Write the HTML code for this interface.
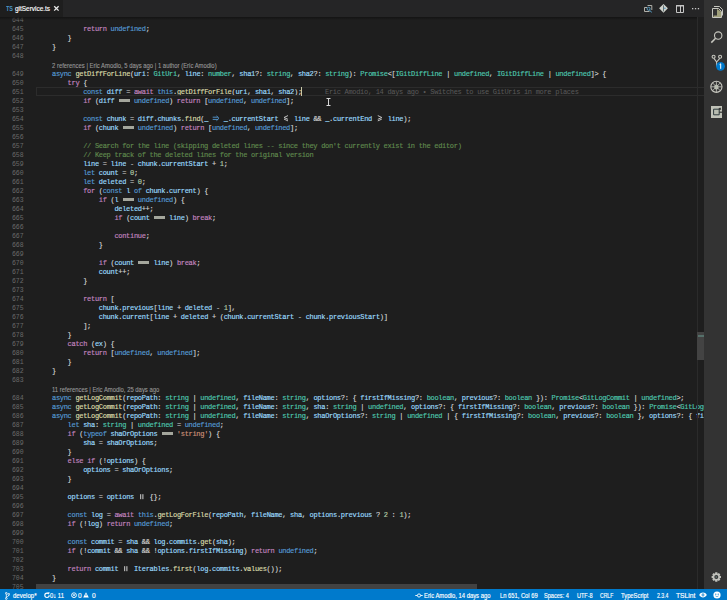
<!DOCTYPE html>
<html><head><meta charset="utf-8"><style>
html,body{margin:0;padding:0}
body{width:727px;height:600px;overflow:hidden;background:#1e1e1e;position:relative;font-family:"Liberation Sans",sans-serif}
#ed{position:absolute;left:0;top:0;width:704px;height:589px;overflow:hidden}
.code{position:absolute;left:36.4px;font-family:"Liberation Mono",monospace;font-size:7px;letter-spacing:-0.3px;-webkit-text-stroke:0.15px;line-height:9px;white-space:pre;color:#d4d4d4}
.code b{font-weight:normal}
.ln{position:absolute;left:0;width:23.6px;text-align:right;font-family:"Liberation Mono",monospace;font-size:6.5px;line-height:9px;color:#6a6a6a}
.cl{position:absolute;left:51.5px;font-family:"Liberation Sans",sans-serif;font-size:6.6px;line-height:9px;color:#999;white-space:pre;transform:scaleX(0.894);transform-origin:0 0;-webkit-text-stroke:0.1px #999}
.blue{color:#569cd6}.pink{color:#c586c0}.fn{color:#dcdcaa}.var{color:#9cdcfe}.type{color:#4ec9b0}
.com{color:#608b4e}.str{color:#ce9178}.num{color:#b5cea8}.op{color:#d4d4d4}
i.eq{display:inline-block;width:11.7px;height:9px;position:relative;vertical-align:top}
i.eq:after{content:"";position:absolute;left:0.4px;right:0.4px;top:1.9px;height:3px;background:#a4a69c}
svg.lg{display:inline-block;width:7.8px;height:9px;vertical-align:top}

</style></head><body>
<div id="ed">
<div class="ln" style="top:16px">644</div>
<div class="ln" style="top:25px">645</div>
<div class="code" style="top:25px">            <b class="pink">return</b> <b class="blue">undefined</b><b class="op">;</b></div>
<div class="ln" style="top:34px">646</div>
<div class="code" style="top:34px">        <b class="op">}</b></div>
<div class="ln" style="top:43px">647</div>
<div class="code" style="top:43px">    <b class="op">}</b></div>
<div class="ln" style="top:52px">648</div>
<div class="cl" style="top:61px">2 references | Eric Amodio, 5 days ago | 1 author (Eric Amodio)</div>
<div class="ln" style="top:70px">649</div>
<div class="code" style="top:70px">    <b class="blue">async</b> <b class="fn">getDiffForLine</b><b class="op">(</b><b class="var">uri</b><b class="op">:</b> <b class="type">GitUri</b><b class="op">,</b> <b class="var">line</b><b class="op">:</b> <b class="type">number</b><b class="op">,</b> <b class="var">sha1</b><b class="op">?</b><b class="op">:</b> <b class="type">string</b><b class="op">,</b> <b class="var">sha2</b><b class="op">?</b><b class="op">:</b> <b class="type">string</b><b class="op">)</b><b class="op">:</b> <b class="type">Promise</b><b class="op">&lt;</b><b class="op">[</b><b class="type">IGitDiffLine</b> <b class="op">|</b> <b class="type">undefined</b><b class="op">,</b> <b class="type">IGitDiffLine</b> <b class="op">|</b> <b class="type">undefined</b><b class="op">]</b><b class="op">&gt;</b> <b class="op">{</b></div>
<div class="ln" style="top:79px">650</div>
<div class="code" style="top:79px">        <b class="pink">try</b> <b class="op">{</b></div>
<div class="ln" style="top:88px">651</div>
<div class="code" style="top:88px">            <b class="blue">const</b> <b class="var">diff</b> <b class="op">=</b> <b class="pink">await</b> <b class="blue">this</b><b class="op">.</b><b class="fn">getDiffForFile</b><b class="op">(</b><b class="var">uri</b><b class="op">,</b> <b class="var">sha1</b><b class="op">,</b> <b class="var">sha2</b><b class="op">)</b><b class="op">;</b></div>
<div class="ln" style="top:97px">652</div>
<div class="code" style="top:97px">            <b class="pink">if</b> <b class="op">(</b><b class="var">diff</b> <i class="eq"></i> <b class="blue">undefined</b><b class="op">)</b> <b class="pink">return</b> <b class="op">[</b><b class="blue">undefined</b><b class="op">,</b> <b class="blue">undefined</b><b class="op">]</b><b class="op">;</b></div>
<div class="ln" style="top:106px">653</div>
<div class="ln" style="top:115px">654</div>
<div class="code" style="top:115px">            <b class="blue">const</b> <b class="var">chunk</b> <b class="op">=</b> <b class="var">diff</b><b class="op">.</b><b class="var">chunks</b><b class="op">.</b><b class="fn">find</b><b class="op">(</b><b class="var">_</b> <svg class="lg" viewBox="0 0 7.8 9"><path d="M0.7 2.2H5.8M0.7 4.4H5.8M4.5 0.9L7 3.3L4.5 5.7" stroke="#569cd6" stroke-width="0.9" fill="none"/></svg> <b class="var">_</b><b class="op">.</b><b class="var">currentStart</b> <svg class="lg" viewBox="0 0 7.8 9"><path d="M6 0.6L2 2.5L6 4.3M2 4.1L6 5.9" stroke="#d4d4d4" stroke-width="0.9" fill="none"/></svg> <b class="var">line</b> <b class="op">&amp;&amp;</b> <b class="var">_</b><b class="op">.</b><b class="var">currentEnd</b> <svg class="lg" viewBox="0 0 7.8 9"><path d="M1.8 0.6L5.8 2.5L1.8 4.3M5.8 4.1L1.8 5.9" stroke="#d4d4d4" stroke-width="0.9" fill="none"/></svg> <b class="var">line</b><b class="op">)</b><b class="op">;</b></div>
<div class="ln" style="top:124px">655</div>
<div class="code" style="top:124px">            <b class="pink">if</b> <b class="op">(</b><b class="var">chunk</b> <i class="eq"></i> <b class="blue">undefined</b><b class="op">)</b> <b class="pink">return</b> <b class="op">[</b><b class="blue">undefined</b><b class="op">,</b> <b class="blue">undefined</b><b class="op">]</b><b class="op">;</b></div>
<div class="ln" style="top:133px">656</div>
<div class="ln" style="top:142px">657</div>
<div class="code" style="top:142px">            <b class="com">// Search for the line (skipping deleted lines -- since they don&#x27;t currently exist in the editor)</b></div>
<div class="ln" style="top:151px">658</div>
<div class="code" style="top:151px">            <b class="com">// Keep track of the deleted lines for the original version</b></div>
<div class="ln" style="top:160px">659</div>
<div class="code" style="top:160px">            <b class="var">line</b> <b class="op">=</b> <b class="var">line</b> <b class="op">-</b> <b class="var">chunk</b><b class="op">.</b><b class="var">currentStart</b> <b class="op">+</b> <b class="num">1</b><b class="op">;</b></div>
<div class="ln" style="top:169px">660</div>
<div class="code" style="top:169px">            <b class="blue">let</b> <b class="var">count</b> <b class="op">=</b> <b class="num">0</b><b class="op">;</b></div>
<div class="ln" style="top:178px">661</div>
<div class="code" style="top:178px">            <b class="blue">let</b> <b class="var">deleted</b> <b class="op">=</b> <b class="num">0</b><b class="op">;</b></div>
<div class="ln" style="top:187px">662</div>
<div class="code" style="top:187px">            <b class="pink">for</b> <b class="op">(</b><b class="blue">const</b> <b class="var">l</b> <b class="blue">of</b> <b class="var">chunk</b><b class="op">.</b><b class="var">current</b><b class="op">)</b> <b class="op">{</b></div>
<div class="ln" style="top:196px">663</div>
<div class="code" style="top:196px">                <b class="pink">if</b> <b class="op">(</b><b class="var">l</b> <i class="eq"></i> <b class="blue">undefined</b><b class="op">)</b> <b class="op">{</b></div>
<div class="ln" style="top:205px">664</div>
<div class="code" style="top:205px">                    <b class="var">deleted</b><b class="op">++</b><b class="op">;</b></div>
<div class="ln" style="top:214px">665</div>
<div class="code" style="top:214px">                    <b class="pink">if</b> <b class="op">(</b><b class="var">count</b> <i class="eq"></i> <b class="var">line</b><b class="op">)</b> <b class="pink">break</b><b class="op">;</b></div>
<div class="ln" style="top:223px">666</div>
<div class="ln" style="top:232px">667</div>
<div class="code" style="top:232px">                    <b class="pink">continue</b><b class="op">;</b></div>
<div class="ln" style="top:241px">668</div>
<div class="code" style="top:241px">                <b class="op">}</b></div>
<div class="ln" style="top:250px">669</div>
<div class="ln" style="top:259px">670</div>
<div class="code" style="top:259px">                <b class="pink">if</b> <b class="op">(</b><b class="var">count</b> <i class="eq"></i> <b class="var">line</b><b class="op">)</b> <b class="pink">break</b><b class="op">;</b></div>
<div class="ln" style="top:268px">671</div>
<div class="code" style="top:268px">                <b class="var">count</b><b class="op">++</b><b class="op">;</b></div>
<div class="ln" style="top:277px">672</div>
<div class="code" style="top:277px">            <b class="op">}</b></div>
<div class="ln" style="top:286px">673</div>
<div class="ln" style="top:295px">674</div>
<div class="code" style="top:295px">            <b class="pink">return</b> <b class="op">[</b></div>
<div class="ln" style="top:304px">675</div>
<div class="code" style="top:304px">                <b class="var">chunk</b><b class="op">.</b><b class="var">previous</b><b class="op">[</b><b class="var">line</b> <b class="op">+</b> <b class="var">deleted</b> <b class="op">-</b> <b class="num">1</b><b class="op">]</b><b class="op">,</b></div>
<div class="ln" style="top:313px">676</div>
<div class="code" style="top:313px">                <b class="var">chunk</b><b class="op">.</b><b class="var">current</b><b class="op">[</b><b class="var">line</b> <b class="op">+</b> <b class="var">deleted</b> <b class="op">+</b> <b class="op">(</b><b class="var">chunk</b><b class="op">.</b><b class="var">currentStart</b> <b class="op">-</b> <b class="var">chunk</b><b class="op">.</b><b class="var">previousStart</b><b class="op">)</b><b class="op">]</b></div>
<div class="ln" style="top:322px">677</div>
<div class="code" style="top:322px">            <b class="op">]</b><b class="op">;</b></div>
<div class="ln" style="top:331px">678</div>
<div class="code" style="top:331px">        <b class="op">}</b></div>
<div class="ln" style="top:340px">679</div>
<div class="code" style="top:340px">        <b class="pink">catch</b> <b class="op">(</b><b class="var">ex</b><b class="op">)</b> <b class="op">{</b></div>
<div class="ln" style="top:349px">680</div>
<div class="code" style="top:349px">            <b class="pink">return</b> <b class="op">[</b><b class="blue">undefined</b><b class="op">,</b> <b class="blue">undefined</b><b class="op">]</b><b class="op">;</b></div>
<div class="ln" style="top:358px">681</div>
<div class="code" style="top:358px">        <b class="op">}</b></div>
<div class="ln" style="top:367px">682</div>
<div class="code" style="top:367px">    <b class="op">}</b></div>
<div class="ln" style="top:376px">683</div>
<div class="cl" style="top:385px">11 references | Eric Amodio, 25 days ago</div>
<div class="ln" style="top:394px">684</div>
<div class="code" style="top:394px">    <b class="blue">async</b> <b class="fn">getLogCommit</b><b class="op">(</b><b class="var">repoPath</b><b class="op">:</b> <b class="type">string</b> <b class="op">|</b> <b class="type">undefined</b><b class="op">,</b> <b class="var">fileName</b><b class="op">:</b> <b class="type">string</b><b class="op">,</b> <b class="var">options</b><b class="op">?</b><b class="op">:</b> <b class="op">{</b> <b class="var">firstIfMissing</b><b class="op">?</b><b class="op">:</b> <b class="type">boolean</b><b class="op">,</b> <b class="var">previous</b><b class="op">?</b><b class="op">:</b> <b class="type">boolean</b> <b class="op">}</b><b class="op">)</b><b class="op">:</b> <b class="type">Promise</b><b class="op">&lt;</b><b class="type">GitLogCommit</b> <b class="op">|</b> <b class="type">undefined</b><b class="op">&gt;</b><b class="op">;</b></div>
<div class="ln" style="top:403px">685</div>
<div class="code" style="top:403px">    <b class="blue">async</b> <b class="fn">getLogCommit</b><b class="op">(</b><b class="var">repoPath</b><b class="op">:</b> <b class="type">string</b> <b class="op">|</b> <b class="type">undefined</b><b class="op">,</b> <b class="var">fileName</b><b class="op">:</b> <b class="type">string</b><b class="op">,</b> <b class="var">sha</b><b class="op">:</b> <b class="type">string</b> <b class="op">|</b> <b class="type">undefined</b><b class="op">,</b> <b class="var">options</b><b class="op">?</b><b class="op">:</b> <b class="op">{</b> <b class="var">firstIfMissing</b><b class="op">?</b><b class="op">:</b> <b class="type">boolean</b><b class="op">,</b> <b class="var">previous</b><b class="op">?</b><b class="op">:</b> <b class="type">boolean</b> <b class="op">}</b><b class="op">)</b><b class="op">:</b> <b class="type">Promise</b><b class="op">&lt;</b><b class="type">GitLogCommit</b> <b class="op">|</b> <b class="type">undefined</b><b class="op">&gt;</b><b class="op">;</b></div>
<div class="ln" style="top:412px">686</div>
<div class="code" style="top:412px">    <b class="blue">async</b> <b class="fn">getLogCommit</b><b class="op">(</b><b class="var">repoPath</b><b class="op">:</b> <b class="type">string</b> <b class="op">|</b> <b class="type">undefined</b><b class="op">,</b> <b class="var">fileName</b><b class="op">:</b> <b class="type">string</b><b class="op">,</b> <b class="var">shaOrOptions</b><b class="op">?</b><b class="op">:</b> <b class="type">string</b> <b class="op">|</b> <b class="type">undefined</b> <b class="op">|</b> <b class="op">{</b> <b class="var">firstIfMissing</b><b class="op">?</b><b class="op">:</b> <b class="type">boolean</b><b class="op">,</b> <b class="var">previous</b><b class="op">?</b><b class="op">:</b> <b class="type">boolean</b> <b class="op">}</b><b class="op">,</b> <b class="var">options</b><b class="op">?</b><b class="op">:</b> <b class="op">{</b> <b class="var">firstIfMissing</b><b class="op">?</b><b class="op">:</b> <b class="type">boolean</b><b class="op">,</b> <b class="var">previous</b><b class="op">?</b><b class="op">:</b> <b class="type">boolean</b> <b class="op">}</b><b class="op">)</b><b class="op">:</b> <b class="type">Promise</b><b class="op">&lt;</b><b class="type">GitLogCommit</b> <b class="op">|</b> <b class="type">undefined</b><b class="op">&gt;</b> <b class="op">{</b></div>
<div class="ln" style="top:421px">687</div>
<div class="code" style="top:421px">        <b class="blue">let</b> <b class="var">sha</b><b class="op">:</b> <b class="type">string</b> <b class="op">|</b> <b class="type">undefined</b> <b class="op">=</b> <b class="blue">undefined</b><b class="op">;</b></div>
<div class="ln" style="top:430px">688</div>
<div class="code" style="top:430px">        <b class="pink">if</b> <b class="op">(</b><b class="blue">typeof</b> <b class="var">shaOrOptions</b> <i class="eq"></i> <b class="str">&#x27;string&#x27;</b><b class="op">)</b> <b class="op">{</b></div>
<div class="ln" style="top:439px">689</div>
<div class="code" style="top:439px">            <b class="var">sha</b> <b class="op">=</b> <b class="var">shaOrOptions</b><b class="op">;</b></div>
<div class="ln" style="top:448px">690</div>
<div class="code" style="top:448px">        <b class="op">}</b></div>
<div class="ln" style="top:457px">691</div>
<div class="code" style="top:457px">        <b class="pink">else</b> <b class="pink">if</b> <b class="op">(</b><b class="op">!</b><b class="var">options</b><b class="op">)</b> <b class="op">{</b></div>
<div class="ln" style="top:466px">692</div>
<div class="code" style="top:466px">            <b class="var">options</b> <b class="op">=</b> <b class="var">shaOrOptions</b><b class="op">;</b></div>
<div class="ln" style="top:475px">693</div>
<div class="code" style="top:475px">        <b class="op">}</b></div>
<div class="ln" style="top:484px">694</div>
<div class="ln" style="top:493px">695</div>
<div class="code" style="top:493px">        <b class="var">options</b> <b class="op">=</b> <b class="var">options</b> <svg class="lg" viewBox="0 0 7.8 9"><path d="M2.7 1.2V6.2M4.9 1.2V6.2" stroke="#d4d4d4" stroke-width="1" fill="none"/></svg> <b class="op">{</b><b class="op">}</b><b class="op">;</b></div>
<div class="ln" style="top:502px">696</div>
<div class="ln" style="top:511px">697</div>
<div class="code" style="top:511px">        <b class="blue">const</b> <b class="var">log</b> <b class="op">=</b> <b class="pink">await</b> <b class="blue">this</b><b class="op">.</b><b class="fn">getLogForFile</b><b class="op">(</b><b class="var">repoPath</b><b class="op">,</b> <b class="var">fileName</b><b class="op">,</b> <b class="var">sha</b><b class="op">,</b> <b class="var">options</b><b class="op">.</b><b class="var">previous</b> <b class="op">?</b> <b class="num">2</b> <b class="op">:</b> <b class="num">1</b><b class="op">)</b><b class="op">;</b></div>
<div class="ln" style="top:520px">698</div>
<div class="code" style="top:520px">        <b class="pink">if</b> <b class="op">(</b><b class="op">!</b><b class="var">log</b><b class="op">)</b> <b class="pink">return</b> <b class="blue">undefined</b><b class="op">;</b></div>
<div class="ln" style="top:529px">699</div>
<div class="ln" style="top:538px">700</div>
<div class="code" style="top:538px">        <b class="blue">const</b> <b class="var">commit</b> <b class="op">=</b> <b class="var">sha</b> <b class="op">&amp;&amp;</b> <b class="var">log</b><b class="op">.</b><b class="var">commits</b><b class="op">.</b><b class="fn">get</b><b class="op">(</b><b class="var">sha</b><b class="op">)</b><b class="op">;</b></div>
<div class="ln" style="top:547px">701</div>
<div class="code" style="top:547px">        <b class="pink">if</b> <b class="op">(</b><b class="op">!</b><b class="var">commit</b> <b class="op">&amp;&amp;</b> <b class="var">sha</b> <b class="op">&amp;&amp;</b> <b class="op">!</b><b class="var">options</b><b class="op">.</b><b class="var">firstIfMissing</b><b class="op">)</b> <b class="pink">return</b> <b class="blue">undefined</b><b class="op">;</b></div>
<div class="ln" style="top:556px">702</div>
<div class="ln" style="top:565px">703</div>
<div class="code" style="top:565px">        <b class="pink">return</b> <b class="var">commit</b> <svg class="lg" viewBox="0 0 7.8 9"><path d="M2.7 1.2V6.2M4.9 1.2V6.2" stroke="#d4d4d4" stroke-width="1" fill="none"/></svg> <b class="var">Iterables</b><b class="op">.</b><b class="fn">first</b><b class="op">(</b><b class="var">log</b><b class="op">.</b><b class="var">commits</b><b class="op">.</b><b class="fn">values</b><b class="op">(</b><b class="op">)</b><b class="op">)</b><b class="op">;</b></div>
<div class="ln" style="top:574px">704</div>
<div class="code" style="top:574px">    <b class="op">}</b></div>
<div class="ln" style="top:583px">705</div>
</div>
<!-- current line box -->
<div style="position:absolute;left:36px;top:87px;width:672px;height:7px;border:1px solid #2c2c2c"></div>
<div style="position:absolute;left:301px;top:87px;width:1px;height:9px;background:#c8c8a8"></div>
<!-- blame annotation -->
<div style="position:absolute;left:325.0px;top:88px;font-family:'Liberation Mono',monospace;font-size:7px;letter-spacing:-0.3px;line-height:9px;white-space:pre;color:#5a5a5a">Eric Amodio, 14 days ago • Switches to use GitUris in more places</div>
<!-- mouse ibeam -->
<svg style="position:absolute;left:325px;top:97px" width="8" height="10" viewBox="0 0 8 10"><path d="M1.5 1.5h4M3.5 1.5v7M1.5 8.5h4" stroke="#d8d8d8" stroke-width="1" fill="none"/></svg>
<!-- vertical scrollbar -->
<div style="position:absolute;left:697px;top:17px;width:1px;height:572px;background:#2b2b2b"></div>
<div style="position:absolute;left:697px;top:332px;width:7px;height:28px;background:#434343"></div>
<div style="position:absolute;left:698px;top:335px;width:6px;height:2px;background:#55706a"></div>
<!-- horizontal scrollbar -->
<div style="position:absolute;left:36px;top:584px;width:440.5px;height:5px;background:#424242"></div>
<!-- tab bar -->
<div style="position:absolute;left:0;top:0;width:704px;height:17px;background:#252526"></div>
<div style="position:absolute;left:0;top:17px;width:697px;height:3px;background:linear-gradient(#131313,rgba(30,30,30,0))"></div>
<div style="position:absolute;left:0;top:0;width:63px;height:17px;background:#1e1e1e"></div>
<div style="position:absolute;left:6.2px;top:4px;font-family:'Liberation Sans',sans-serif;font-weight:bold;font-size:7px;line-height:9px;color:#4a94c6;transform:scaleX(0.78);transform-origin:0 0">TS</div>
<div style="position:absolute;left:15px;top:4px;font-family:'Liberation Sans',sans-serif;font-size:6.8px;line-height:9px;color:#ffffff;white-space:pre;transform:scaleX(0.946);transform-origin:0 0;-webkit-text-stroke:0.15px #fff">gitService.ts</div>
<svg style="position:absolute;left:53px;top:5px" width="7" height="7" viewBox="0 0 7 7"><path d="M1.2 1.2L5.6 5.6M5.6 1.2L1.2 5.6" stroke="#e8e8e8" stroke-width="1.3"/></svg>
<!-- editor title icons -->
<svg style="position:absolute;left:642px;top:3px" width="12" height="11" viewBox="0 0 12 11"><path d="M5.5 2.5H9.8V7" stroke="#c0c0b8" fill="none" stroke-width="0.9"/><path d="M2.5 4.5H5M2.5 4.5V8.5H7.5" stroke="#c0c0b8" fill="none" stroke-width="0.9"/><circle cx="6.6" cy="5.8" r="1.5" stroke="#5aa6cf" fill="none" stroke-width="0.9"/><path d="M7.4 7.2L9.8 9.3" stroke="#5aa6cf" stroke-width="1"/></svg>
<svg style="position:absolute;left:658px;top:3px" width="11" height="11" viewBox="0 0 11 11"><path d="M5.5 0.9L9.9 5.3L5.5 9.7L1.1 5.3z" fill="#cfd2cc"/><path d="M5.5 2.4v6" stroke="#46555a" stroke-width="0.8"/><circle cx="6.9" cy="5.3" r="0.7" fill="#3f8fbf"/></svg>
<svg style="position:absolute;left:675px;top:4px" width="10" height="10" viewBox="0 0 10 10"><path d="M1.5 1.5H8.5V8.5H1.5Z" stroke="#c5c5c5" fill="none" stroke-width="1"/><path d="M1 1.8H9" stroke="#c5c5c5" stroke-width="1.4"/><path d="M5.5 2V8.5" stroke="#c5c5c5" stroke-width="1"/></svg>
<svg style="position:absolute;left:691px;top:6px" width="9" height="5" viewBox="0 0 9 5"><rect x="1" y="2" width="1.3" height="1.3" fill="#c5c5c5"/><rect x="3.9" y="2" width="1.3" height="1.3" fill="#c5c5c5"/><rect x="6.8" y="2" width="1.3" height="1.3" fill="#c5c5c5"/></svg>
<!-- activity bar -->
<div style="position:absolute;left:704px;top:0;width:23px;height:589px;background:#333333"></div>
<svg style="position:absolute;left:704px;top:0" width="23" height="125" viewBox="0 0 23 125">
 <g fill="none" stroke="#c8c8c0" stroke-width="1">
  <path d="M10 6.5h5.5l3 3v6"/>
  <path d="M8.5 8.5h6l3 3v6h-9z"/>
 </g>
 <path d="M13 9L17 11.5V17H9.5V15.6H13z" fill="#a0a07a"/>
 <g fill="none" stroke="#c8c8c0" stroke-width="1.1">
  <circle cx="14.2" cy="35.6" r="3.7"/>
  <path d="M11.6 38.3L7.3 42.6" stroke-width="1.5"/>
  <circle cx="9.6" cy="56.8" r="1.5"/>
  <circle cx="16.1" cy="56.8" r="1.5"/>
  <path d="M9.9 58.4L12.6 62V66.5M15.8 58.4L12.6 62"/>
  <circle cx="12.4" cy="86.8" r="5.6" stroke-width="1.1"/>
  <path d="M12.4 81.5v10.6M7 86.8h10.8M8.6 83l7.6 7.6M16.2 83l-7.6 7.6" stroke-width="0.8"/>
 </g>
 <ellipse cx="12.4" cy="87" rx="2.2" ry="2.6" fill="#b8bcb0"/>
 <path d="M7 106h11v12H7z" fill="#c0c2b8"/>
 <path d="M9.6 109.2h5.6v5.6H9.6z" fill="#b8bcb0" stroke="#2e3a3c" stroke-width="1"/>
 <path d="M15.2 111.6h2.8v1.2h-2.8z" fill="#333"/>
 <path d="M14.5 108.6l1.8-1 1 1.6-1.6 1z" fill="#333"/>
 <circle cx="16.5" cy="66.3" r="4.4" fill="#007acc"/>
 <path d="M16.7 63.8v5M15.6 64.6l1.1-0.8" stroke="#fff" stroke-width="1"/>
</svg>
<svg style="position:absolute;left:710px;top:571px" width="13" height="13" viewBox="0 0 13 13"><g transform="translate(6.3,6)"><path d="M-1.05 -4.68 L1.05 -4.68 L1.27 -3.37 L1.49 -3.28 L2.57 -4.05 L4.05 -2.57 L3.28 -1.49 L3.37 -1.27 L4.68 -1.05 L4.68 1.05 L3.37 1.27 L3.28 1.49 L4.05 2.57 L2.57 4.05 L1.49 3.28 L1.27 3.37 L1.05 4.68 L-1.05 4.68 L-1.27 3.37 L-1.49 3.28 L-2.57 4.05 L-4.05 2.57 L-3.28 1.49 L-3.37 1.27 L-4.68 1.05 L-4.68 -1.05 L-3.37 -1.27 L-3.28 -1.49 L-4.05 -2.57 L-2.57 -4.05 L-1.49 -3.28 L-1.27 -3.37Z" fill="#c0c2bc"/><circle r="2.0" fill="#333"/><circle r="1.0" fill="#5d6d6b"/></g></svg>
<!-- status bar -->
<div style="position:absolute;left:0;top:589px;width:727px;height:11px;background:#007acc"></div>
<div id="sb" style="position:absolute;left:0;top:589.6px;width:727px;height:11px;font-family:'Liberation Sans',sans-serif;font-size:6.6px;line-height:11px;color:#fff;white-space:pre;-webkit-text-stroke:0.15px #fff">
<svg style="position:absolute;left:5px;top:2px" width="5" height="8" viewBox="0 0 5 8"><circle cx="1.3" cy="1.3" r="0.9" fill="none" stroke="#fff" stroke-width="0.8"/><circle cx="3.8" cy="2.3" r="0.9" fill="none" stroke="#fff" stroke-width="0.8"/><circle cx="1.3" cy="6.5" r="0.9" fill="none" stroke="#fff" stroke-width="0.8"/><path d="M1.3 2.2v3.4M3.8 3.2c0 1.5-2.5 1.2-2.5 2.5" stroke="#fff" stroke-width="0.8" fill="none"/></svg>
<span style="position:absolute;left:12.5px;top:0;transform:scaleX(0.915);transform-origin:0 0">develop*</span>
<svg style="position:absolute;left:43.5px;top:2.5px" width="7" height="7" viewBox="0 0 7 7"><circle cx="3" cy="3.3" r="2.2" stroke="#fff" stroke-width="1.1" fill="none" stroke-dasharray="11 2.8"/><path d="M3.4 0.2L5.9 0.6L4.6 2.6z" fill="#fff"/></svg>
<span style="position:absolute;left:50px;top:0;transform:scaleX(0.894);transform-origin:0 0">0↓ 11</span>
<svg style="position:absolute;left:71px;top:2.5px" width="7" height="7" viewBox="0 0 7 7"><circle cx="3" cy="3.2" r="2.4" stroke="#fff" stroke-width="0.9" fill="none"/><path d="M1.9 2.1l2.2 2.2M4.1 2.1l-2.2 2.2" stroke="#fff" stroke-width="0.8"/></svg>
<span style="position:absolute;left:78px;top:0">0</span>
<svg style="position:absolute;left:83px;top:2.5px" width="6" height="6" viewBox="0 0 6 6"><path d="M3 0.3L5.8 5.6H0.2z" fill="#fff"/><path d="M3 2v2" stroke="#007acc" stroke-width="0.7"/></svg>
<span style="position:absolute;left:92px;top:0">0</span>
<svg style="position:absolute;left:415px;top:3px" width="8" height="5" viewBox="0 0 8 5"><circle cx="4" cy="2.5" r="1.6" fill="none" stroke="#fff" stroke-width="0.9"/><path d="M0.3 2.5h2M5.7 2.5h2" stroke="#fff" stroke-width="0.9"/></svg>
<span style="position:absolute;left:423.8px;top:0;transform:scaleX(0.888);transform-origin:0 0">Eric Amodio, 14 days ago</span>
<span style="position:absolute;left:500px;top:0;transform:scaleX(0.878);transform-origin:0 0">Ln 651, Col 69</span>
<span style="position:absolute;left:544.3px;top:0;transform:scaleX(0.848);transform-origin:0 0">Spaces: 4</span>
<span style="position:absolute;left:577.2px;top:0;transform:scaleX(0.839);transform-origin:0 0">UTF-8</span>
<span style="position:absolute;left:600.2px;top:0;transform:scaleX(0.771);transform-origin:0 0">CRLF</span>
<span style="position:absolute;left:620.9px;top:0;transform:scaleX(0.882);transform-origin:0 0">TypeScript</span>
<span style="position:absolute;left:656.5px;top:0;transform:scaleX(0.783);transform-origin:0 0">2.3.4</span>
<span style="position:absolute;left:676px;top:0;transform:scaleX(1.022);transform-origin:0 0">TSLint</span>
<svg style="position:absolute;left:698.7px;top:2.5px" width="8" height="6" viewBox="0 0 8 6"><path d="M0.2 3C2 -0.2 6 -0.2 7.8 3C6 6.2 2 6.2 0.2 3z" fill="#fff"/><circle cx="4" cy="3" r="1.4" fill="#007acc"/><circle cx="4" cy="3" r="0.7" fill="#fff"/></svg>
<svg style="position:absolute;left:713px;top:1.5px" width="8" height="8" viewBox="0 0 8 8"><circle cx="4" cy="4" r="3.6" fill="#fff"/><circle cx="2.8" cy="3.2" r="0.6" fill="#007acc"/><circle cx="5.2" cy="3.2" r="0.6" fill="#007acc"/><path d="M2.4 4.8c0.8 1 2.4 1 3.2 0" stroke="#007acc" stroke-width="0.6" fill="none"/></svg>
</div>

</body></html>
